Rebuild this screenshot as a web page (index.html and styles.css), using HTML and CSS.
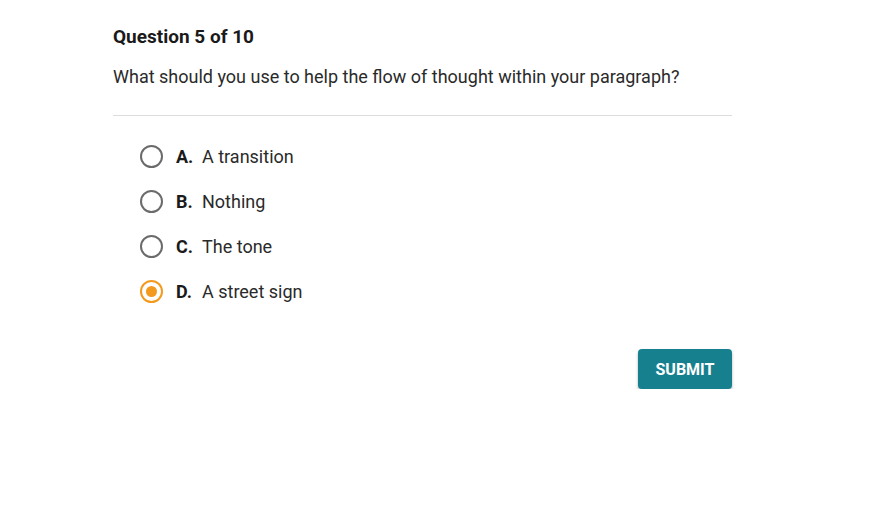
FILE: index.html
```html
<!DOCTYPE html>
<html>
<head>
<meta charset="utf-8">
<link rel="stylesheet" href="styles.css">
</head>
<body>
<main class="quiz">
  <h1 class="quiz-title">Question 5 of 10</h1>
  <p class="quiz-question">What should you use to help the flow of thought within your paragraph?</p>
  <hr class="quiz-rule">
  <ul class="options">
    <li class="option"><span class="radio"></span><span class="letter">A.</span><span class="answer">A transition</span></li>
    <li class="option"><span class="radio"></span><span class="letter">B.</span><span class="answer">Nothing</span></li>
    <li class="option"><span class="radio"></span><span class="letter">C.</span><span class="answer">The tone</span></li>
    <li class="option"><span class="radio selected"></span><span class="letter">D.</span><span class="answer">A street sign</span></li>
  </ul>
  <div class="actions">
    <button class="submit">SUBMIT</button>
  </div>
</main>
</body>
</html>
```
FILE: styles.css
```css
* { box-sizing: border-box; }
body {
  margin: 0;
  background: #fff;
  font-family: Roboto, "Liberation Sans", sans-serif;
  color: #222;
}
.quiz {
  width: 619px;
  margin-left: 113px;
  padding-top: 25px;
}
.quiz-title {
  margin: 0;
  font-size: 19px;
  line-height: 24px;
  font-weight: 700;
  color: #1a1a1a;
}
.quiz-question {
  margin: 16px 0 0;
  font-size: 18px;
  line-height: 24px;
  color: #2a2a2a;
}
.quiz-rule {
  margin: 26px 0 0;
  border: 0;
  border-top: 1px solid #dcdcdc;
}
.options {
  list-style: none;
  margin: 0;
  padding: 28px 0 0 27px;
  display: flex;
  flex-direction: column;
  gap: 21px;
}
.option {
  display: flex;
  align-items: center;
  height: 24px;
  font-size: 18px;
  color: #2a2a2a;
}
.radio {
  width: 23px;
  height: 23px;
  border: 2px solid #6b6b6b;
  border-radius: 50%;
  margin-right: 13px;
  display: flex;
  align-items: center;
  justify-content: center;
  flex: none;
}
.radio.selected {
  border-color: #f39a1e;
}
.radio.selected::after {
  content: "";
  width: 11px;
  height: 11px;
  border-radius: 50%;
  background: #f39a1e;
}
.letter {
  font-weight: 700;
  width: 26px;
  color: #1a1a1a;
}
.actions {
  display: flex;
  justify-content: flex-end;
  margin-top: 46px;
}
.submit {
  width: 94px;
  height: 40px;
  border: 0;
  border-radius: 4px;
  background: #17808f;
  color: #fff;
  font-family: Roboto, "Liberation Sans", sans-serif;
  font-size: 16px;
  font-weight: 700;
  box-shadow: 0 2px 3px rgba(0,0,0,0.3);
}
```
